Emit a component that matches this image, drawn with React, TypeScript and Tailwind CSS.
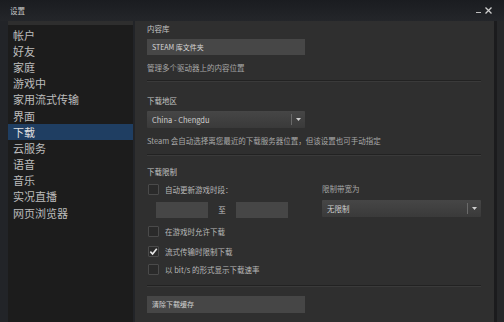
const font = "font-['Noto_Sans_CJK_SC','Noto_Sans',sans-serif]";

const navItems = [
  "帐户",
  "好友",
  "家庭",
  "游戏中",
  "家用流式传输",
  "界面",
  "下载",
  "云服务",
  "语音",
  "音乐",
  "实况直播",
  "网页浏览器",
];

function Divider({ className = "" }: { className?: string }) {
  return (
    <div className={`h-[2px] border-t border-[#222222] border-b border-b-[#3a3a3a] ${className}`} />
  );
}

function Checkbox({ checked, label }: { checked?: boolean; label: string }) {
  return (
    <div className="flex h-[11px] items-center gap-[6px]">
      <div className="flex h-[11px] w-[11px] items-center justify-center rounded-[1px] border border-[#4a4a4a] bg-[#2a2a2a]">
        {checked ? (
          <svg width="9" height="9" viewBox="0 0 10 10">
            <path d="M1.5 5.2 L4 7.8 L8.6 2" fill="none" stroke="#e6e6e6" strokeWidth="1.8" />
          </svg>
        ) : null}
      </div>
      <span className="text-[7.5px] leading-none text-[#b8b8b8]">{label}</span>
    </div>
  );
}

function Select({ value, className = "" }: { value: string; className?: string }) {
  return (
    <div
      className={`flex h-[17px] items-center rounded-[1px] bg-gradient-to-b from-[#464646] to-[#3a3a3a] pl-[5px] ${className}`}
    >
      <span className="flex-1 text-[7.5px] leading-none text-[#d0d0d0]">{value}</span>
      <div className="h-[11px] w-px bg-[#6a6a6a]" />
      <div className="flex w-[13px] justify-center">
        <svg width="5" height="3" viewBox="0 0 5 3">
          <path d="M0 0 H5 L2.5 3 Z" fill="#cfcfcf" />
        </svg>
      </div>
    </div>
  );
}

export default function App() {
  return (
    <div className={`flex h-[322px] w-[504px] flex-col overflow-hidden bg-[#222428] ${font}`}>
      {/* title bar */}
      <div className="flex h-[21px] items-center bg-gradient-to-b from-[#1a1c20] to-[#24262a] pl-[10px] pr-[12px]">
        <span className="text-[7.5px] text-[#c8c8c8]">设置</span>
        <div className="ml-auto flex items-center gap-[4px] text-[#bdbdbd]">
          <span className="mt-[4px] block h-[1.5px] w-[5px] bg-[#bdbdbd]" />
          <svg width="7" height="7" viewBox="0 0 7 7">
            <path d="M0.5 0.5 L6.5 6.5 M6.5 0.5 L0.5 6.5" stroke="#cfcfcf" strokeWidth="1.3" />
          </svg>
        </div>
      </div>

      <div className="flex flex-1 pl-[8px]">
        {/* sidebar */}
        <div className="flex w-[125px] flex-col border-t-[4px] border-[#2e2e2e] bg-[#1c1c1c] pt-[2px]">
          {navItems.map((item) => (
            <div
              key={item}
              className={`flex h-[16.2px] items-center pl-[5px] text-[11px] leading-none ${
                item === "下载" ? "bg-[#1f3e62] text-[#e0e0e0]" : "text-[#bdbdbd]"
              }`}
            >
              {item}
            </div>
          ))}
        </div>

        {/* content */}
        <div className="ml-[2px] flex flex-1 flex-col bg-[#2f2f2f] pl-[12px] pr-[13px] pt-[2px]">
          <div className="text-[7.5px] leading-[12px] text-[#c4c4c4]">内容库</div>
          <div className="mt-[4px] flex h-[16px] w-[158px] items-center bg-[#474747] pl-[5px] text-[7px] leading-none text-[#d6d6d6]">
            STEAM 库文件夹
          </div>
          <div className="mt-[8px] text-[7.5px] leading-[10px] text-[#a8a8a8]">管理多个驱动器上的内容位置</div>
          <Divider className="mt-[7px]" />

          <div className="mt-[14px] text-[7.5px] leading-[10px] text-[#c4c4c4]">下载地区</div>
          <Select value="China - Chengdu" className="mt-[5px] w-[158px]" />
          <div className="mt-[8px] text-[7.5px] leading-[10px] text-[#a8a8a8]">
            Steam 会自动选择离您最近的下载服务器位置，但该设置也可手动指定
          </div>
          <Divider className="mt-[8px]" />

          <div className="mt-[11px] text-[7.5px] leading-[10px] text-[#c4c4c4]">下载限制</div>
          <div className="mt-[2px] flex">
            <div className="flex w-[175px] flex-col pl-[1px]">
              <div className="mt-[5px]">
                <Checkbox label="自动更新游戏时段：" />
              </div>
              <div className="mt-[7px] flex items-center pl-[8px]">
                <div className="h-[16px] w-[52px] bg-[#464646]" />
                <span className="w-[28px] text-center text-[7.5px] text-[#c4c4c4]">至</span>
                <div className="h-[16px] w-[52px] bg-[#464646]" />
              </div>
              <div className="mt-[8px]">
                <Checkbox label="在游戏时允许下载" />
              </div>
              <div className="mt-[9px]">
                <Checkbox checked label="流式传输时限制下载" />
              </div>
              <div className="mt-[7px]">
                <Checkbox label="以 bit/s 的形式显示下载速率" />
              </div>
            </div>
            <div className="flex flex-col">
              <div className="mt-[5px] text-[7.5px] leading-[10px] text-[#a8a8a8]">限制带宽为</div>
              <Select value="无限制" className="mt-[6px] w-[159px]" />
            </div>
          </div>
          <Divider className="mt-[10px]" />
          <div className="mt-[9px] flex h-[17px] w-[158px] items-center bg-[#464646] pl-[5px] text-[7px] leading-none text-[#d0d0d0]">
            清除下载缓存
          </div>
        </div>

        {/* right edge */}
        <div className="w-[3px] bg-[#1b1b1d]" />
        <div className="w-[7px] bg-[#262729]" />
      </div>
    </div>
  );
}
